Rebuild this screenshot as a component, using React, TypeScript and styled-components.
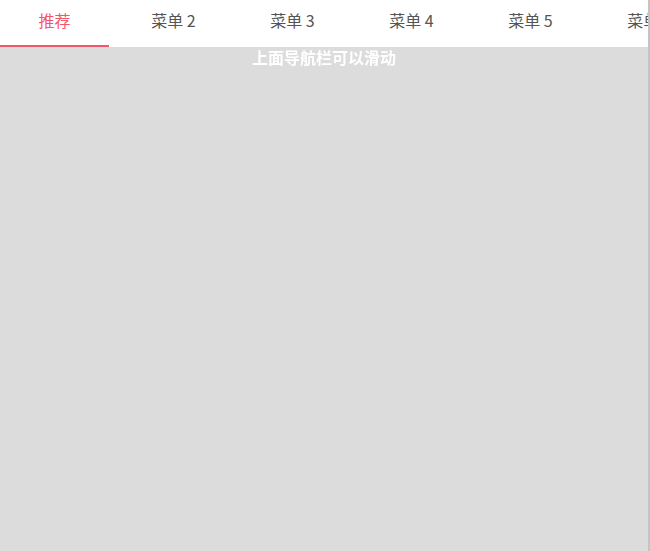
import React, { useState } from 'react'
import styled, { createGlobalStyle } from 'styled-components'

const GlobalStyle = createGlobalStyle`
  html, body {
    margin: 0;
    padding: 0;
    background: #ffffff;
  }
  body {
    font-family: "Noto Sans CJK SC", "Noto Sans", sans-serif;
  }
`

const menus = ['推荐', '菜单 2', '菜单 3', '菜单 4', '菜单 5', '菜单 6', '菜单 7', '菜单 8']

const App = () => {
  const [active, setActive] = useState(0)

  return (
    <>
      <GlobalStyle />
      <Page>
        <NavBar>
          {menus.map((m, i) => (
            <Tab key={m} $active={i === active} onClick={() => setActive(i)}>
              {m}
            </Tab>
          ))}
        </NavBar>
        <Content>
          <Hint>上面导航栏可以滑动</Hint>
        </Content>
      </Page>
    </>
  )
}

const Page = styled.div`
  display: flex;
  flex-direction: column;
  width: 648px;
  height: 551px;
  border-right: 2px solid #c4c4c4;
  background-color: #dcdcdc;
`

const NavBar = styled.nav`
  display: flex;
  gap: 10px;
  height: 47px;
  flex-shrink: 0;
  background-color: #ffffff;
  overflow-x: auto;
  overflow-y: hidden;
  scrollbar-width: none;
  &::-webkit-scrollbar {
    display: none;
  }
`

const Tab = styled.div<{ $active: boolean }>`
  flex: 0 0 109px;
  box-sizing: border-box;
  display: flex;
  align-items: center;
  justify-content: center;
  padding-bottom: 5px;
  font-size: 16px;
  color: ${(p) => (p.$active ? '#f2566a' : '#555555')};
  border-bottom: 2px solid ${(p) => (p.$active ? '#f2566a' : 'transparent')};
  cursor: pointer;
  white-space: nowrap;
`

const Content = styled.div`
  flex: 1;
  background-color: #dcdcdc;
`

const Hint = styled.p`
  margin: 0;
  text-align: center;
  font-size: 16px;
  font-weight: bold;
  line-height: 20px;
  color: #ffffff;
`

export default App
